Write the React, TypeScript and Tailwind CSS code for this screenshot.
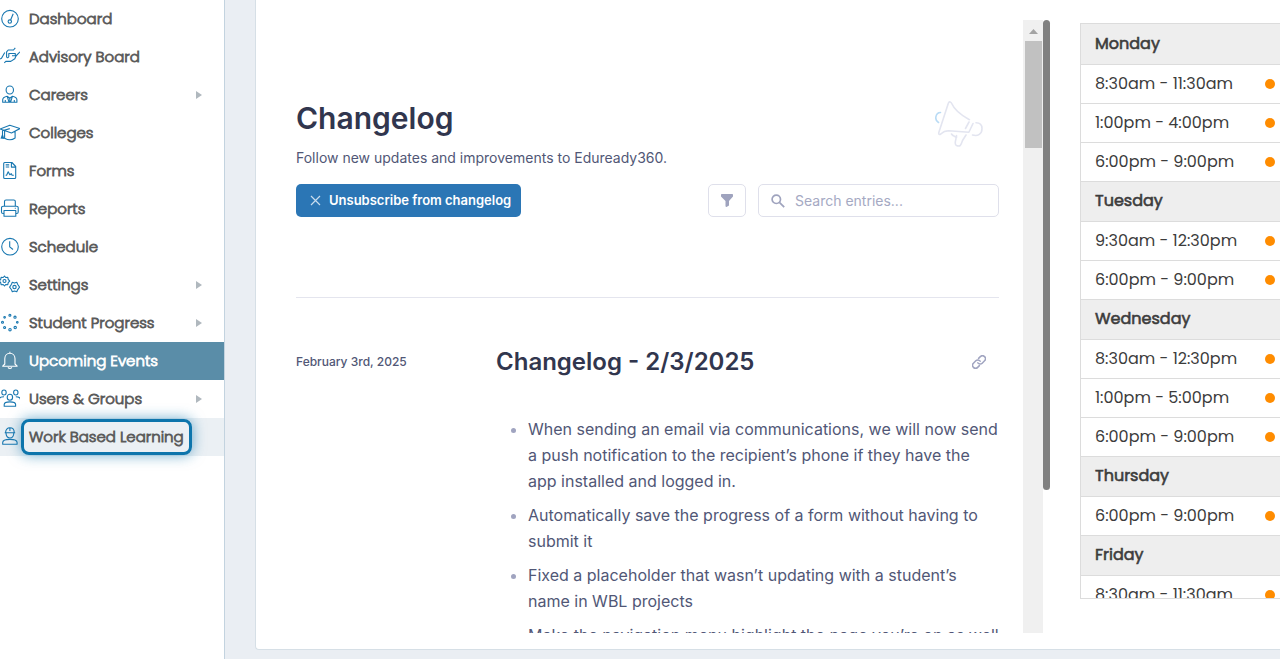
import type { ReactNode } from "react"
import clsx from "clsx"

const ICONS: Record<string, ReactNode> = {
    dashboard: (
        <>
            <circle cx="10" cy="9.7" r="8.3" />
            <circle cx="9.8" cy="12.6" r="1.7" />
            <path d="M10.600 11 13.200 4.800" />
        </>
    ),
    advisory: (
        <path d="M0 12c1.300-.2 2-1 2.500-2.500L4.800 5.500M4.300 15.900l1.500-1.500h5l4-2.600 1.200-2.800 4-4.200M6.600 10V4.800L8.200 3h5.300l1.800-2.200M6.600 10c.6 1.300 2 .7 2.200-.5V6.500h6.500v2.300H12" />
    ),
    careers: (
        <>
            <ellipse cx="9.800" cy="5" rx="3.700" ry="4" />
            <path d="M2.700 17.200v-2.400c0-2 1.600-2.800 4.400-3.500l2.700 2 2.700-2c2.800.7 4.400 1.500 4.400 3.500v2.400zM7.200 11.300l1.800 5.900M12.400 11.300l-1.800 5.900M9.800 13.300v3.900M5.300 15v2.200M14.300 15v2.200" />
        </>
    ),
    colleges: (
        <path d="M0 6 9.800 2.300 20 5.600l-8.500 4.300zM4.600 8v7.200c3.500 2 7.500 2 10.500-.2V8.400M9.800 5.600 2.500 7.700v8M1 15.800l1.500-4 1.300 4" />
    ),
    forms: (
        <>
            <path d="M4.700 1.500h7.200l3.800 4v11a1 1 0 0 1-1 1h-10a1 1 0 0 1-1-1v-14a1 1 0 0 1 1-1zM11.400 1.500v4.600h4.300M5.700 3.900h3.500M5.700 6h3.500" />
            <path d="M5.600 14.300h1l1.600-3.600 1.600 3 1.500-1 .8 1.600h1.700" />
        </>
    ),
    reports: (
        <>
            <path d="M4.500 7V2.500a1.500 1.500 0 0 1 1.500-1.500h7.800a1.500 1.500 0 0 1 1.500 1.500V7" />
            <path d="M4 14.500H3A1.500 1.500 0 0 1 1.500 13V9A1.700 1.700 0 0 1 3.200 7.200h13.300A1.700 1.700 0 0 1 18.200 9v4a1.500 1.500 0 0 1-1.500 1.500h-1M4 11.500h11.800v5.700H4zM14.800 9.300h1" />
        </>
    ),
    schedule: (
        <>
            <circle cx="10" cy="9.700" r="8.300" />
            <path d="M9.700 4.300v5.600l3.300 2.600" />
        </>
    ),
    settings: (
        <>
            <path d="m4.500 1 1.200 1.500 2.100-.2.400 2.100 1.500 1.600-1.500 1.600-.4 2.100-2.100-.2-1.200 1.500-1.300-1.500-2.100.2-.4-2.100L-.800 6 .700 4.400l.4-2.100 2.100.2z" />
            <circle cx="4.500" cy="6" r="1.500" />
            <path d="m12.300 7.300 2.200.8 2.300-.8.800 1.900 2 2.900-2 2.700-.8 2-2.300-.8-2.200.8-.8-2-1.900-2.700 1.900-2.900z" />
            <circle cx="14.500" cy="12.100" r="1.700" />
        </>
    ),
    progress: (
        <>
            <circle cx="9.900" cy="2.200" r="1" />
            <circle cx="15" cy="4.200" r="1.100" />
            <circle cx="17.300" cy="9.300" r=".8" />
            <circle cx="15.200" cy="14.600" r="1.200" />
            <circle cx="10" cy="16.700" r="1.200" />
            <circle cx="4.600" cy="14.500" r="1" />
            <circle cx="2.500" cy="9.300" r="1" />
            <circle cx="4.600" cy="4.300" r=".8" />
        </>
    ),
    events: (
        <path d="M9.900.8v1.500M4.800 13V7.800c0-3.300 2.200-5.500 5.100-5.500S15 4.500 15 7.800V13l2.200 2.200H2.700zM8 16.200c.8 1.600 3 1.600 3.800 0" />
    ),
    users: (
        <>
            <ellipse cx="4" cy="3.500" rx="2.200" ry="2.500" />
            <ellipse cx="15.800" cy="3.500" rx="2.200" ry="2.500" />
            <ellipse cx="9.900" cy="8.300" rx="2.700" ry="3" />
            <path d="M-1 11c0-2.300 1.500-3.300 5-3.300M20.500 11c0-2.300-1.500-3.300-4.700-3.300M4.200 17.200v-1.600c0-2.200 2-2.700 5.700-2.700s5.700.5 5.700 2.700v1.600z" />
        </>
    ),
    work: (
        <>
            <path d="M4.700 5.800h10.500M5.600 5.500C5.600 2.700 7.400.8 9.900.8s4.300 1.900 4.300 4.700M9.900 1v3M6 6c0 3 1.500 5 3.900 5s3.900-2 3.900-5" />
            <path d="M2.700 17.200v-1.800c0-2.500 2.400-3 7.200-3s7.200.5 7.200 3v1.800z" />
        </>
    )
}

const NAV = [
    { label: "Dashboard", icon: "dashboard" },
    { label: "Advisory Board", icon: "advisory" },
    { label: "Careers", icon: "careers", children: true },
    { label: "Colleges", icon: "colleges" },
    { label: "Forms", icon: "forms" },
    { label: "Reports", icon: "reports" },
    { label: "Schedule", icon: "schedule" },
    { label: "Settings", icon: "settings", children: true },
    { label: "Student Progress", icon: "progress", children: true },
    { label: "Upcoming Events", icon: "events", active: true },
    { label: "Users & Groups", icon: "users", children: true },
    { label: "Work Based Learning", icon: "work", focused: true }
]

const HOURS = [
    { day: "Monday", slots: ["8:30am - 11:30am", "1:00pm - 4:00pm", "6:00pm - 9:00pm"] },
    { day: "Tuesday", slots: ["9:30am - 12:30pm", "6:00pm - 9:00pm"] },
    { day: "Wednesday", slots: ["8:30am - 12:30pm", "1:00pm - 5:00pm", "6:00pm - 9:00pm"] },
    { day: "Thursday", slots: ["6:00pm - 9:00pm"] },
    { day: "Friday", slots: ["8:30am - 11:30am"] }
]

const CHANGES = [
    "When sending an email via communications, we will now send a push notification to the recipient’s phone if they have the app installed and logged in.",
    "Automatically save the progress of a form without having to submit it",
    "Fixed a placeholder that wasn’t updating with a student’s name in WBL projects",
    "Make the navigation menu highlight the page you’re on as well"
]

function Sidebar() {
    return (
        <nav className="w-[225px] shrink-0 border-r border-[#c3d3df] bg-white font-['Poppins','Inter',sans-serif]">
            <ul>
                {NAV.map((item) => (
                    <li key={item.label}>
                        <a
                            href="#"
                            className={clsx(
                                "flex h-[38px] items-center gap-[9px] pr-[22px] text-[15px] font-light [-webkit-text-stroke:0.8px_currentColor]",
                                item.active ? "bg-[#5a8da8] text-white" : "text-[#5a5a5a]",
                                item.focused && "bg-[#ebf0f4]"
                            )}
                        >
                            <svg
                                viewBox="0 0 20 20"
                                className={clsx("size-5 shrink-0", item.active ? "text-white" : "text-[#1877b0]")}
                                fill="none"
                                stroke="currentColor"
                                strokeWidth="1.1"
                                strokeLinejoin="round"
                                aria-hidden="true"
                            >
                                {ICONS[item.icon]}
                            </svg>
                            <span
                                className={clsx(
                                    "whitespace-nowrap",
                                    item.focused &&
                                        "-ml-2 flex h-9 items-center rounded-lg border-3 border-[#0d75ac] px-[5px] shadow-[0_0_14px_rgba(13,117,172,0.6)]"
                                )}
                            >
                                {item.label}
                            </span>
                            {item.children && (
                                <svg viewBox="0 0 6 8" className="ml-auto h-2 w-1.5 text-[#b0b8be]" fill="currentColor" aria-hidden="true">
                                    <path d="M0 0 6 4 0 8z" />
                                </svg>
                            )}
                        </a>
                    </li>
                ))}
            </ul>
        </nav>
    )
}

function Megaphone() {
    return (
        <svg viewBox="0 0 48 46" className="mt-[3px] mr-4 h-[46px] w-12 shrink-0" fill="none" stroke="#e3e5f0" strokeWidth="1.600" strokeLinecap="round" strokeLinejoin="round" aria-hidden="true">
            <path d="M5.500 11.500c-5 .2-6.500 7.500-2 10" stroke="#b9dbf5" />
            <path d="M13.500 1.800c1-1.600 2.500-.8 3.200.7 3 7 10 12 17.700 16.200M13.500 1.800 3.800 31.500c-.4 1.800.6 2.400 2 1.500 2.500-2.400 4.500-3.200 8-3.200l20 1.500M34 21l-3.500 6.500M38 22.500l-4 8.500" />
            <path d="M41 21.800c3.500 0 6 2 6 5.700 0 5.500-4 8-9.500 6.500" />
            <path d="M16.500 33c1.500 2.500 4 2 4.500 3.500.5 2-2.500 6.500.5 8 4 1.500 4.500-.5 6-5l3.500-5.500M21.500 36.500v-2" />
        </svg>
    )
}

function Changelog() {
    return (
        <section className="h-full min-w-0 flex-1 overflow-hidden pl-10 pr-6 pt-[78px] font-['Inter',sans-serif] text-[#515776]">
            <header className="border-b border-[#e4e5ee] pb-20">
                <div className="flex items-start justify-between">
                    <div>
                        <h1 className="text-[30px] leading-10 font-semibold text-[#31364e]">Changelog</h1>
                        <p className="mt-2.5 text-sm leading-5">Follow new updates and improvements to Eduready360.</p>
                    </div>
                    <Megaphone />
                </div>
                <div className="mt-4 flex items-center gap-3">
                    <button className="mr-auto flex h-[33px] items-center gap-2 rounded-[5px] bg-[#2b76b5] pr-2.5 pl-[14px] text-[13px] font-semibold whitespace-nowrap text-white">
                        <svg viewBox="0 0 11 11" className="size-[11px]" stroke="#c8dcee" strokeWidth="1.200" aria-hidden="true">
                            <path d="m1 1 9 9M10 1 1 10" />
                        </svg>
                        Unsubscribe from changelog
                    </button>
                    <button aria-label="Filter" className="flex h-[33px] w-[38px] items-center justify-center rounded-[5px] border border-[#dfe0eb]">
                        <svg viewBox="0 0 12 13" className="h-[13px] w-3" fill="#9fa3be" aria-hidden="true">
                            <path d="M.8 0h10.400q.8 0 .8.800v1.700L8 7v4.500L5.500 13Q4.500 13 4.500 12V7L0 2.500V.8Q0 0 .8 0z" />
                        </svg>
                    </button>
                    <label className="flex h-[33px] w-[241px] items-center gap-2.5 rounded-[5px] border border-[#dfe0eb] px-3">
                        <svg viewBox="0 0 14 14" className="size-[14px] shrink-0" fill="none" stroke="#9fa3be" strokeWidth="1.700" aria-hidden="true">
                            <circle cx="5.300" cy="5.300" r="4.200" />
                            <path d="m8.400 8.400 4.800 4.800" />
                        </svg>
                        <input aria-label="Search entries" placeholder="Search entries..." className="w-full min-w-0 text-sm outline-none placeholder:text-[#a5a9c3]" />
                    </label>
                </div>
            </header>
            <article className="flex pt-12">
                <time className="w-[200px] shrink-0 text-xs leading-8 font-medium">February 3rd, 2025</time>
                <div className="min-w-0 flex-1">
                    <div className="flex items-center justify-between pr-[13px]">
                        <h2 className="text-2xl leading-8 font-semibold text-[#31364e]">Changelog - 2/3/2025</h2>
                        <a href="#" aria-label="Link to entry">
                            <svg viewBox="0 0 24 24" className="size-[14px]" fill="none" stroke="#a0a4c0" strokeWidth="2.600" strokeLinecap="round" aria-hidden="true">
                                <path d="M10 13.500a5 5 0 0 0 7.500.5l4-4a5 5 0 0 0-7.200-7.200l-3 3" />
                                <path d="M14 10.500a5 5 0 0 0-7.500-.5l-4 4a5 5 0 0 0 7.200 7.200l3-3" />
                            </svg>
                        </a>
                    </div>
                    <ul className="mt-[38px] flex list-disc flex-col gap-2 pl-8 leading-[26px] marker:text-[#a0a4c0]">
                        {CHANGES.map((text) => (
                            <li key={text}>{text}</li>
                        ))}
                    </ul>
                </div>
            </article>
        </section>
    )
}

function Hours() {
    return (
        <aside className="flex w-[200px] shrink-0 flex-col pt-[23px] pb-[34px] font-['Poppins','Inter',sans-serif] text-[#3c3c3c]">
            <div className="min-h-0 flex-1 overflow-hidden border-y border-l border-[#dcdcdc]">
                <table className="w-full">
                    {HOURS.map((group) => (
                        <tbody key={group.day}>
                            <tr className="h-10 border-b border-[#dcdcdc] bg-[#eee]">
                                <th colSpan={2} className="pl-[14px] text-left font-normal [-webkit-text-stroke:0.6px_currentColor]">
                                    {group.day}
                                </th>
                            </tr>
                            {group.slots.map((slot) => (
                                <tr key={slot} className="h-[39px] border-b border-[#dcdcdc]">
                                    <td className="pl-[14px] whitespace-nowrap">{slot}</td>
                                    <td className="w-[15px]">
                                        <div className="size-2.5 rounded-full bg-[#ff8c00]" />
                                    </td>
                                </tr>
                            ))}
                        </tbody>
                    ))}
                </table>
            </div>
        </aside>
    )
}

export default function App() {
    return (
        <div className="flex h-screen overflow-hidden bg-white">
            <Sidebar />
            <main className="flex min-w-0 flex-1 bg-[#eaeef3] pb-[9px] pl-[30px]">
                <div className="flex min-w-0 flex-1 rounded-bl border-b border-l border-[#d6dfe6] bg-white pb-4">
                    <div className="flex min-w-0 flex-1 pt-5 pr-[30px]">
                        <Changelog />
                        <div className="flex w-5 flex-col items-center bg-[#f0f0f0] pt-[9px]">
                            <svg viewBox="0 0 9 5" className="h-[5px] w-[9px]" fill="#a3a3a3" aria-hidden="true">
                                <path d="M0 5 4.500 0 9 5z" />
                            </svg>
                            <div className="mt-[7px] h-[107px] w-[17px] bg-[#c1c1c1]" />
                        </div>
                        <div className="h-[470px] w-[7px] rounded-full bg-[#808080]" />
                    </div>
                    <Hours />
                </div>
            </main>
        </div>
    )
}
